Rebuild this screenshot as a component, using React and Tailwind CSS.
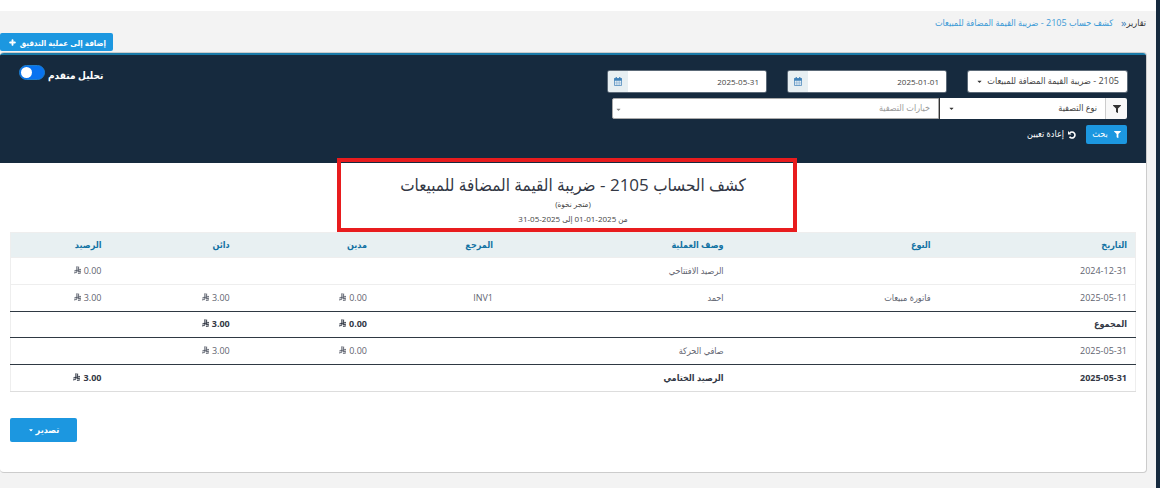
import { useState } from "react";
import { FaCaretDown, FaFilter, FaPlus } from "react-icons/fa";

const COLUMNS = [
  { key: "date", label: "التاريخ", width: "w-[17.5%]" },
  { key: "type", label: "النوع", width: "w-[18.4%]" },
  { key: "description", label: "وصف العملية", width: "w-[20.5%]" },
  { key: "reference", label: "المرجع", width: "w-[11.2%]" },
  { key: "debit", label: "مدين", width: "w-[12.2%]", money: true },
  { key: "credit", label: "دائن", width: "w-[11.4%]", money: true },
  { key: "balance", label: "الرصيد", width: "w-[8.8%]", money: true },
];

const ROWS = [
  { date: "2024-12-31", description: "الرصيد الافتتاحي", balance: "0.00" },
  {
    date: "2025-05-11",
    type: "فاتورة مبيعات",
    description: "احمد",
    reference: "INV1",
    debit: "0.00",
    credit: "3.00",
    balance: "3.00",
  },
  { date: "المجموع", debit: "0.00", credit: "3.00", bold: true, ruled: true, total: true },
  {
    date: "2025-05-31",
    description: "صافي الحركة",
    debit: "0.00",
    credit: "3.00",
    ruled: true,
  },
  {
    date: "2025-05-31",
    description: "الرصيد الختامي",
    balance: "3.00",
    bold: true,
    ruled: true,
  },
];

function Riyal() {
  return (
    <svg
      viewBox="0 0 1124 1257"
      className="ms-[3px] inline-block h-2 w-[7px] align-baseline"
      fill="currentColor"
      stroke="currentColor"
      strokeWidth="40"
      aria-hidden="true"
    >
      <path d="M699.62 1113.02c-20.06 44.48-33.32 92.75-38.4 143.37l424.51-90.24c20.06-44.47 33.31-92.75 38.4-143.37l-424.51 90.24Z" />
      <path d="M1085.73 895.8c20.06-44.47 33.32-92.75 38.4-143.37l-330.68 70.33v-135.2l292.27-62.11c20.06-44.47 33.32-92.75 38.4-143.37l-330.68 70.27V66.13c-50.67 28.45-95.67 66.32-132.25 110.99v403.35l-132.25 28.11V0c-50.67 28.44-95.67 66.32-132.25 110.99v525.69l-295.91 62.88c-20.06 44.47-33.33 92.75-38.42 143.37l334.33-71.05v170.26l-358.3 76.14c-20.06 44.47-33.32 92.75-38.4 143.37l375.04-79.7c30.53-6.35 56.77-24.4 73.83-49.24l68.78-101.97c7.14-10.55 11.3-23.27 11.3-36.97v-149.98l132.25-28.11v270.4l424.53-90.28Z" />
    </svg>
  );
}

function CalendarIcon() {
  return (
    <svg viewBox="0 0 16 18" className="h-[9px] w-2" fill="none" stroke="currentColor">
      <path d="M1 3h14v14H1z" fill="#fff" strokeWidth="1.4" />
      <path d="M1 3h14v4H1z" fill="currentColor" />
      <path d="M4.7 7v10M8 7v10M11.3 7v10M1 10.5h14M1 13.8h14" strokeWidth="0.7" />
      <path d="M4.5 0v4M11.5 0v4" strokeWidth="2.4" />
    </svg>
  );
}

function ResetIcon() {
  return (
    <svg viewBox="0 0 16 16" className="h-2 w-2" fill="none" stroke="currentColor">
      <path d="M3.6 3.8A6 6 0 1 1 3 11.4" strokeWidth="3.2" />
      <path d="M0 0v7h7z" fill="currentColor" stroke="none" />
    </svg>
  );
}

function SelectBox({ label, children, className, selectClass, caretClass }) {
  return (
    <div className={`relative flex h-[21px] bg-white ${className}`}>
      <select
        aria-label={label}
        className={`h-full w-full appearance-none bg-transparent ps-2 pe-4 pb-[2px] outline-none ${selectClass}`}
      >
        {children}
      </select>
      <FaCaretDown
        className={`pointer-events-none absolute top-[7px] h-[7px] w-[7px] ${caretClass}`}
      />
    </div>
  );
}

function DateBox({ label, value, onChange }) {
  return (
    <div className="flex h-[21px] w-[158px] overflow-hidden rounded-xs bg-white ring-1 ring-white/30">
      <input
        aria-label={label}
        value={value}
        onChange={(e) => onChange(e.target.value)}
        className="min-w-0 flex-1 bg-white px-[7px] text-[8px] text-[#444] outline-none"
      />
      <button
        type="button"
        aria-label={`اختيار ${label}`}
        className="flex w-5 items-center justify-center bg-[#e7eff2] text-[#3d80b8]"
      >
        <CalendarIcon />
      </button>
    </div>
  );
}

function Filters() {
  const [from, setFrom] = useState("2025-01-01");
  const [to, setTo] = useState("2025-05-31");
  const [advanced, setAdvanced] = useState(false);

  return (
    <form
      onSubmit={(e) => e.preventDefault()}
      className="flex min-h-[108px] items-start justify-between bg-[#162a3e] ps-[19px] pe-[19px]"
    >
      <div className="flex flex-col gap-[6px] pt-4">
        <div className="flex gap-[22px]">
          <SelectBox
            label="الحساب"
            className="w-[159px] rounded-xs ring-1 ring-white/30"
            selectClass="text-[#444]"
            caretClass="left-2 text-[#333]"
          >
            <option>2105 - ضريبة القيمة المضافة للمبيعات</option>
          </SelectBox>
          <DateBox label="من تاريخ" value={from} onChange={setFrom} />
          <DateBox label="إلى تاريخ" value={to} onChange={setTo} />
        </div>

        <div className="flex">
          <span className="flex w-[22px] items-center justify-center rounded-s-xs border-e border-[#ccc] bg-[#f8f8f8] text-[#333]">
            <FaFilter className="h-2 w-2" />
          </span>
          <SelectBox
            label="نوع التصفية"
            className="w-[166px] border-e border-[#333]"
            selectClass="text-[#444]"
            caretClass="left-2 text-[#333]"
          >
            <option>نوع التصفية</option>
          </SelectBox>
          <SelectBox
            label="خيارات التصفية"
            className="w-[327px] rounded-e-xs border border-[#aaa]"
            selectClass="text-[#999]"
            caretClass="left-[2px] text-[#888]"
          >
            <option>خيارات التصفية</option>
          </SelectBox>
        </div>

        <div className="flex items-center gap-[10px] text-white">
          <button
            type="submit"
            className="flex h-[19px] w-[41px] items-center justify-center gap-[6px] rounded-xs bg-[#1c97e0]"
          >
            <FaFilter className="h-[7px] w-[7px]" />
            <span className="pb-[2px]">بحث</span>
          </button>
          <button type="reset" className="flex items-center gap-1">
            <ResetIcon />
            <span className="pb-[2px]">إعادة تعيين</span>
          </button>
        </div>
      </div>

      <label className="flex items-start gap-[3px] pt-[10px] text-[10px] leading-4 font-bold text-white">
        <span className="pt-[2px]">تحليل متقدم</span>
        <input
          type="checkbox"
          role="switch"
          checked={advanced}
          onChange={(e) => setAdvanced(e.target.checked)}
          className="peer sr-only"
        />
        <span className="flex h-[15px] w-[26px] items-center justify-end rounded-full border border-[#1c7fd0] bg-[#0873f0] px-px peer-checked:justify-start">
          <span className="h-[11px] w-[11px] rounded-full bg-white" />
        </span>
      </label>
    </form>
  );
}

function StatementTable() {
  return (
    <table className="w-full table-fixed border-collapse border border-[#eee] border-b-[#ddd] text-start">
      <thead>
        <tr className="h-[25px] bg-[#e8f0f2] text-[#1272a3]">
          {COLUMNS.map((col) => (
            <th key={col.key} className={`px-2 pt-0 pb-[2px] text-start font-bold ${col.width}`}>
              {col.label}
            </th>
          ))}
        </tr>
      </thead>
      <tbody>
        {ROWS.map((row, i) => (
          <tr
            key={i}
            className={`border-t ${row.total ? "h-[26px]" : "h-[27px]"} ${
              row.ruled ? "border-[#2f3943]" : "border-[#eee]"
            } ${row.bold ? "font-bold text-[#333845]" : "text-[#5f6470]"}`}
          >
            {COLUMNS.map((col) => (
              <td key={col.key} className="px-2 pt-0 pb-[2px] whitespace-nowrap">
                {row[col.key]}
                {col.money && row[col.key] ? <Riyal /> : null}
              </td>
            ))}
          </tr>
        ))}
      </tbody>
    </table>
  );
}

export default function App() {
  return (
    <div
      dir="rtl"
      className="flex min-h-screen bg-[#f3f3f3] font-['Open_Sans','DejaVu_Sans_Condensed','DejaVu_Sans',sans-serif] text-[9px] leading-[15px] text-[#444]"
    >
      <aside className="w-1 shrink-0 bg-[#162a3e]" />

      <main className="min-w-0 flex-1">
        <header className="h-[11px] bg-white" />

        <nav className="flex h-[22px] items-center gap-2 ps-[10px]">
          <div className="flex items-center">
            <a href="#reports" className="text-[#333]">
              تقارير
            </a>
            <span className="text-[11px] text-[#3d80b8]">«</span>
          </div>
          <a href="#statement" className="text-[#3c9ad6]">
            كشف حساب 2105 - ضريبة القيمة المضافة للمبيعات
          </a>
        </nav>

        <div className="flex justify-end">
          <button
            type="button"
            className="flex h-[18px] w-[113px] items-center gap-1 rounded-xs bg-[#1c97e0] ps-[7px] text-[8px] font-bold whitespace-nowrap text-white"
          >
            إضافة إلى عملية التدقيق
            <FaPlus className="h-[7px] w-[7px]" stroke="currentColor" strokeWidth="40" />
          </button>
        </div>

        <section className="ms-[9px] mt-px overflow-hidden rounded-sm border border-e-0 border-[#ccc] bg-white">
          <div className="h-[2px] bg-[#1a7aa8]" />
          <Filters />

          <div className="px-[10px] pb-[30px]">
            <div className="relative flex flex-col items-center pt-[11px] pb-[6px] text-center">
              <h1 className="text-[17px] leading-[22px] text-[#333845]">
                كشف الحساب 2105 - ضريبة القيمة المضافة للمبيعات
              </h1>
              <p className="text-[8px]">(متجر نخوة)</p>
              <p className="text-[8px]">من 2025-01-01 إلى 2025-05-31</p>
              <div className="pointer-events-none absolute -top-[5px] bottom-0 left-[327px] w-[460px] border-4 border-[#e81c1e]" />
            </div>

            <StatementTable />

            <div className="mt-[26px] flex justify-end">
              <button
                type="button"
                className="flex h-6 w-[67px] items-center justify-center gap-[2px] rounded-xs bg-[#1c97e0] font-bold text-white"
              >
                <span className="pb-[2px]">تصدير</span>
                <FaCaretDown className="h-[6px] w-[6px]" />
              </button>
            </div>
          </div>
        </section>
      </main>
    </div>
  );
}
